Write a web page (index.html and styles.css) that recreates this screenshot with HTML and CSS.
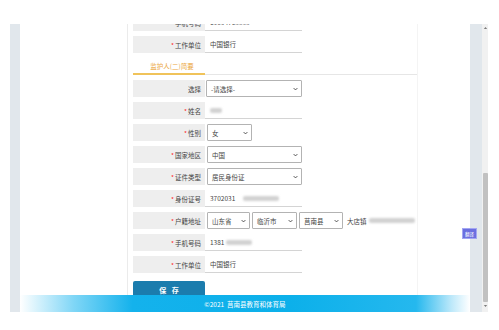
FILE: index.html
```html
<!DOCTYPE html>
<html lang="zh">
<head>
<meta charset="utf-8">
<link rel="stylesheet" href="styles.css">
</head>
<body>
<div class="frame">
  <div class="page">
    <div class="main">
      <aside class="side"></aside>
      <section class="content">
        <div class="form">
          <div class="row"><div class="label"><i>*</i>手机号码</div><div class="value">15054763333</div></div>
          <div class="row"><div class="label"><i>*</i>工作单位</div><div class="value">中国银行</div></div>
          <div class="tabs"><span class="tab">监护人(二)简要</span></div>
          <div class="row"><div class="label">选择</div><div class="value sel"><div class="select w96"><span>-请选择-</span><svg viewBox="0 0 8 5"><path d="M1 1l3 3 3-3" fill="none" stroke="#333" stroke-width="1.3"/></svg></div></div></div>
          <div class="row"><div class="label"><i>*</i>姓名</div><div class="value"><span class="blur b12"></span></div></div>
          <div class="row"><div class="label"><i>*</i>性别</div><div class="value sel"><div class="select w45 ml2"><span>女</span><svg viewBox="0 0 8 5"><path d="M1 1l3 3 3-3" fill="none" stroke="#333" stroke-width="1.3"/></svg></div></div></div>
          <div class="row"><div class="label"><i>*</i>国家地区</div><div class="value sel"><div class="select w95 ml2"><span>中国</span><svg viewBox="0 0 8 5"><path d="M1 1l3 3 3-3" fill="none" stroke="#333" stroke-width="1.3"/></svg></div></div></div>
          <div class="row"><div class="label"><i>*</i>证件类型</div><div class="value sel"><div class="select w95 ml2"><span>居民身份证</span><svg viewBox="0 0 8 5"><path d="M1 1l3 3 3-3" fill="none" stroke="#333" stroke-width="1.3"/></svg></div></div></div>
          <div class="row"><div class="label"><i>*</i>身份证号</div><div class="value">3702031<span class="blur b36"></span></div></div>
          <div class="row"><div class="label"><i>*</i>户籍地址</div>
            <div class="addr">
              <div class="select w43"><span>山东省</span><svg viewBox="0 0 8 5"><path d="M1 1l3 3 3-3" fill="none" stroke="#333" stroke-width="1.3"/></svg></div>
              <div class="select w45"><span>临沂市</span><svg viewBox="0 0 8 5"><path d="M1 1l3 3 3-3" fill="none" stroke="#333" stroke-width="1.3"/></svg></div>
              <div class="select w44"><span>莒南县</span><svg viewBox="0 0 8 5"><path d="M1 1l3 3 3-3" fill="none" stroke="#333" stroke-width="1.3"/></svg></div>
              <span class="street">大店镇<span class="blur b48"></span></span>
            </div>
          </div>
          <div class="row"><div class="label"><i>*</i>手机号码</div><div class="value">1381<span class="blur b26"></span></div></div>
          <div class="row"><div class="label"><i>*</i>工作单位</div><div class="value">中国银行</div></div>
          <button class="save">保 存</button>
        </div>
      </section>
    </div>
    <footer class="footer">©2021&nbsp;&nbsp;莒南县教育和体育局</footer>
  </div>
  <div class="gutter"></div>
  <div class="scrollbar">
    <svg class="arrow" viewBox="0 0 6 4"><path d="M1 3h4L3 1z" fill="#555"/></svg>
    <div class="thumb"></div>
    <svg class="arrow" viewBox="0 0 6 4"><path d="M1 1h4L3 3z" fill="#555"/></svg>
  </div>
  <div class="badge">翻译</div>
</div>
</body>
</html>
```
FILE: styles.css
```css
* { box-sizing: border-box; }
html, body { margin: 0; padding: 0; background: #fff; }
body {
  font-family: "Noto Sans CJK SC", "Noto Sans", sans-serif;
  font-size: 6.5px;
  color: #333;
}
.frame {
  position: relative;
  margin: 24px 0 0 10px;
  width: 478px;
  height: 288px;
  padding-left: 10px;
  display: flex;
  background: #e1e7ec;
}
.page {
  width: 450px;
  display: flex;
  flex-direction: column;
  background: #fff;
  overflow: hidden;
}
.main {
  flex: 1;
  min-height: 0;
  display: flex;
  overflow: hidden;
}
.side {
  width: 108px;
  border-right: 1px solid #ebebeb;
}
.content {
  width: 290px;
  padding-left: 5px;
  border-right: 1px solid #f4f4f4;
}
.form {
  display: flex;
  flex-direction: column;
  gap: 5px;
  margin-top: -10px;
}
.row {
  display: flex;
  height: 17px;
  flex-shrink: 0;
}
.label {
  width: 72px;
  background: #eeeeee;
  display: flex;
  align-items: center;
  justify-content: flex-end;
  padding-right: 4px;
  color: #444;
  white-space: nowrap;
}
.label i {
  font-style: normal;
  color: #f22;
  margin-right: 1px;
}
.value {
  width: 97px;
  display: flex;
  align-items: center;
  padding-left: 5px;
  border-bottom: 1px solid #d4d4d4;
  white-space: nowrap;
  color: #444;
}
.value.sel {
  border-bottom: none;
  padding-left: 1px;
}
.select {
  height: 17px;
  display: flex;
  align-items: center;
  justify-content: space-between;
  padding: 0 3px 0 4px;
  border: 1px solid #b3b3b3;
  border-radius: 1px;
  background: #fff;
  flex-shrink: 0;
}
.select svg { width: 5px; height: 4px; }
.w96 { width: 96px; }
.w95 { width: 95px; }
.w45 { width: 45px; }
.w44 { width: 44px; }
.w43 { width: 43px; }
.ml2 { margin-left: 1px; }
.addr {
  display: flex;
  align-items: center;
  gap: 2px;
  padding-left: 2px;
  white-space: nowrap;
  color: #444;
}
.street { margin-left: 2px; display: flex; align-items: center; }
.blur {
  display: inline-block;
  height: 5px;
  background: #d2d2d2;
  border-radius: 2px;
  filter: blur(1px);
  margin-left: 2px;
}
.b12 { width: 12px; margin-left: 0; }
.b26 { width: 26px; }
.b36 { width: 36px; margin-left: 8px; }
.b48 { width: 46px; }
.tabs {
  height: 17px;
  flex-shrink: 0;
  display: flex;
  border-bottom: 1px solid #e6e6e6;
}
.tab {
  width: 72px;
  display: flex;
  align-items: center;
  justify-content: center;
  padding-left: 6px;
  color: #eba63b;
  border-bottom: 2px solid #f0c35a;
  margin-bottom: -1px;
}
.save {
  flex-shrink: 0;
  margin-top: 3px;
  width: 72px;
  height: 17px;
  border: none;
  border-radius: 2px 2px 0 0;
  background: #1b7cad;
  color: #fff;
  font-family: "Liberation Serif", "Noto Sans CJK SC", serif;
  font-weight: bold;
  font-size: 7px;
  letter-spacing: 2px;
  padding: 0 0 0 2px;
}
.footer {
  height: 17px;
  flex-shrink: 0;
  display: flex;
  align-items: center;
  justify-content: center;
  color: #fff;
  font-size: 6.5px;
  background: linear-gradient(to right, #ffffff 0%, #7fd6f6 12%, #14b2ec 25%, #0cb0ea 60%, #25b8ee 88%, #bfe9fa 96%, #ffffff 100%);
}
.gutter { width: 12px; }
.scrollbar {
  width: 6px;
  background: #f1f1f1;
  display: flex;
  flex-direction: column;
  align-items: center;
}
.arrow { width: 5px; height: 4px; margin: 2px 0; }
.thumb {
  width: 5px;
  height: 129px;
  margin-top: 141px;
  background: #c1c1c1;
  border-radius: 1px;
}
.badge {
  position: absolute;
  left: 452px;
  top: 204px;
  width: 15px;
  height: 11px;
  background: #6b6fe0;
  border: 1px solid #a3a6f2;
  color: #fff;
  font-size: 4.5px;
  display: flex;
  align-items: center;
  justify-content: center;
}
```
